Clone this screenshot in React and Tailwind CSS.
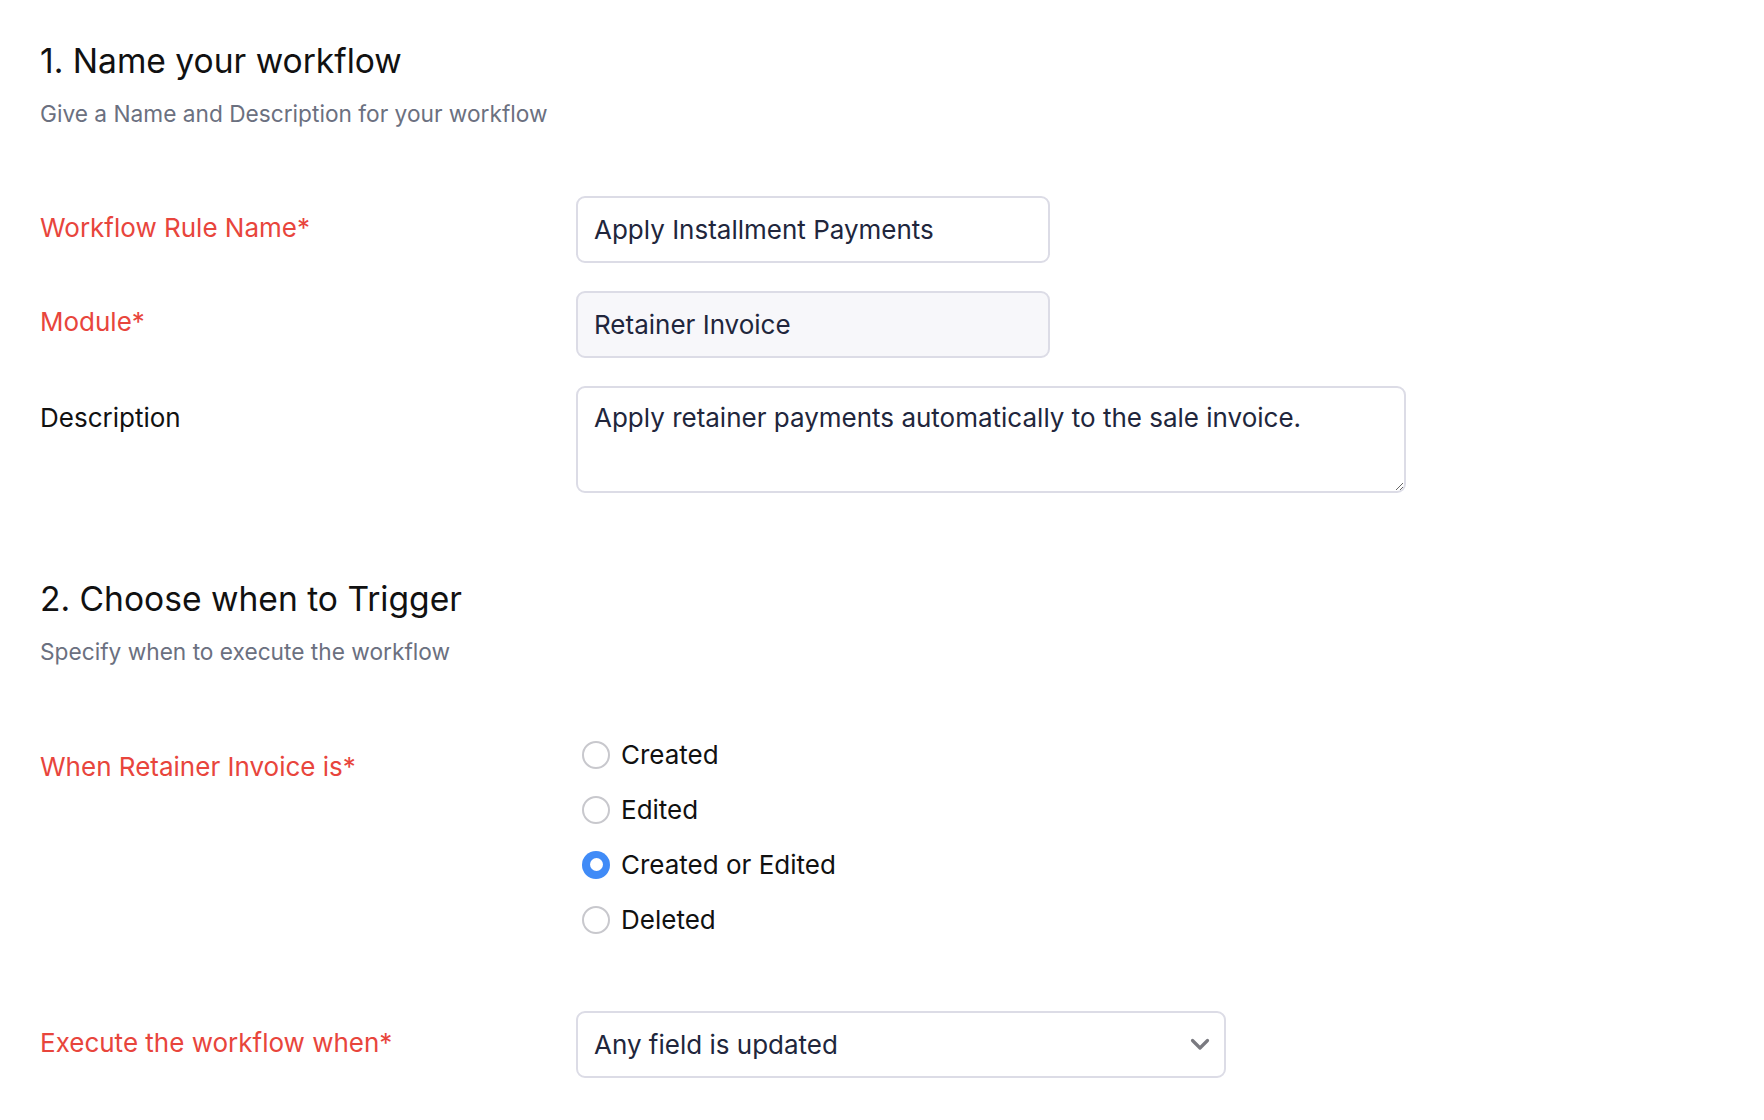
import { useState } from "react";

const font = { fontFamily: "Inter, 'Noto Sans', sans-serif" };

const Label = ({ children, required, className = "" }) => (
  <div
    className={
      "w-[536px] shrink-0 text-[26px] leading-[32px] " +
      (required ? "text-[#e8453c] " : "text-[#111111] ") +
      className
    }
  >
    {children}
    {required && "*"}
  </div>
);

const Radio = ({ checked, label, onSelect }) => (
  <button
    type="button"
    onClick={onSelect}
    className="flex h-[55px] items-center gap-[11px] text-left"
  >
    {checked ? (
      <span className="flex h-[28px] w-[28px] items-center justify-center rounded-full bg-[#408bf7]">
        <span className="h-[13px] w-[13px] rounded-full bg-white" />
      </span>
    ) : (
      <span className="h-[28px] w-[28px] rounded-full border-2 border-[#c8c8cd] bg-white" />
    )}
    <span className="text-[26px] leading-[32px] text-[#111111]">{label}</span>
  </button>
);

export default function App() {
  const [trigger, setTrigger] = useState("Created or Edited");
  const options = ["Created", "Edited", "Created or Edited", "Deleted"];

  return (
    <div style={font} className="min-h-screen bg-white px-10 pt-[41px] pb-10">
      {/* section 1 */}
      <h2 className="text-[33.6px] leading-[40px] text-[#111111]">1. Name your workflow</h2>
      <p className="mt-[19px] text-[22.7px] leading-[28px] text-[#6b7080]">
        Give a Name and Description for your workflow
      </p>

      <div className="mt-[68px] flex flex-col gap-[28px]">
        <div className="flex items-start">
          <Label required className="pt-[16px]">Workflow Rule Name</Label>
          <input
            defaultValue="Apply Installment Payments"
            className="h-[67px] w-[474px] rounded-[9px] border-2 border-[#dcdce6] bg-white px-4 text-[26px] text-[#21263c] outline-none"
          />
        </div>
        <div className="flex items-start">
          <Label required className="pt-[15px]">Module</Label>
          <input
            readOnly
            value="Retainer Invoice"
            className="h-[67px] w-[474px] rounded-[9px] border-2 border-[#dcdce6] bg-[#f7f7fa] px-4 text-[26px] text-[#21263c] outline-none"
          />
        </div>
        <div className="flex items-start">
          <Label className="pt-[16px]">Description</Label>
          <textarea
            defaultValue="Apply retainer payments automatically to the sale invoice."
            className="h-[107px] w-[830px] rounded-[9px] border-2 border-[#dcdce6] bg-white px-4 pt-[14px] text-[26px] leading-[32px] text-[#21263c] outline-none"
          />
        </div>
      </div>

      {/* section 2 */}
      <h2 className="mt-[86px] text-[33.6px] leading-[40px] text-[#111111]">2. Choose when to Trigger</h2>
      <p className="mt-[19px] text-[22.7px] leading-[28px] text-[#6b7080]">
        Specify when to execute the workflow
      </p>

      <div className="mt-[61px] flex items-start">
        <Label required className="pt-[24px]">When Retainer Invoice is</Label>
        <div className="flex flex-col pl-[6px]">
          {options.map((o) => (
            <Radio key={o} label={o} checked={trigger === o} onSelect={() => setTrigger(o)} />
          ))}
        </div>
      </div>

      <div className="mt-[64px] flex items-start">
        <Label required className="pt-[16px]">Execute the workflow when</Label>
        <div className="flex h-[67px] w-[650px] items-center justify-between rounded-[9px] border-2 border-[#dcdce6] bg-white pl-4 pr-[14px]">
          <span className="text-[26px] text-[#21263c]">Any field is updated</span>
          <svg width="20" height="13" viewBox="0 0 20 13" fill="none" stroke="#7a7a80" strokeWidth="3.2" strokeLinecap="round" strokeLinejoin="round">
            <path d="M2.5 2.5l7.5 7.5 7.5-7.5" />
          </svg>
        </div>
      </div>
    </div>
  );
}
